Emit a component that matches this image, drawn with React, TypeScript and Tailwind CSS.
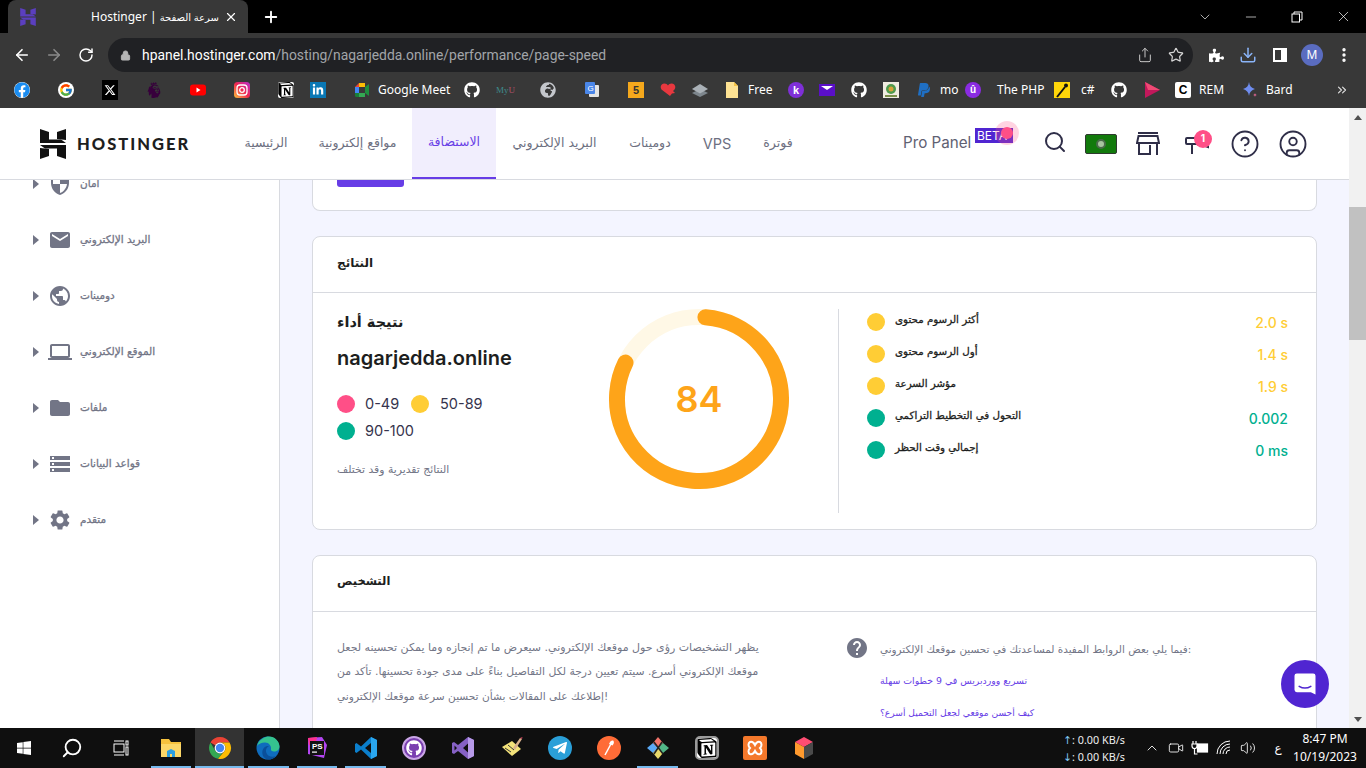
import React from "react";
import { FcGoogle } from "react-icons/fc";
import { FaFacebook, FaGithub, FaLinkedinIn, FaTelegramPlane, FaWindows, FaPaypal, FaPuzzlePiece, FaGlobeAfrica } from "react-icons/fa";
import { FaXTwitter } from "react-icons/fa6";
import { SiNotion, SiPremierleague } from "react-icons/si";
import { MdSecurity, MdEmail, MdPublic, MdLaptop, MdFolder, MdStorage, MdSettings, MdHelp } from "react-icons/md";
import { ArrowLeft, ArrowRight, RotateCw, Lock, Share, Star, Download, X, Plus, ChevronDown, ChevronUp, Minus, Search, HelpCircle, CircleUser, MoreVertical, ChevronsRight, Volume2, Video } from "lucide-react";

const ar = "font-['DejaVu_Sans',sans-serif]";
const faux = "[-webkit-text-stroke:0.3px_currentColor]";

function HLogo({ className, fill }: { className: string; fill: string }) {
  return (
    <svg viewBox="0 0 26 30" className={className} fill={fill}>
      <polygon points="0,0 9,3 9,10.5 21,10.5 26,14 0,14" />
      <polygon points="17,3 26,0 26,11 17,10" />
      <polygon points="26,30 17,27 17,19.5 5,19.5 0,16 26,16" />
      <polygon points="9,27 0,30 0,19 9,20" />
    </svg>
  );
}

function Chrome({ s }: { s: string }) {
  return (
    <svg viewBox="0 0 24 24" className={s}>
      <path fill="#ea4335" d="M12 1a11 11 0 0 1 9.53 5.5H12a5.5 5.5 0 0 0-4.76 2.75L2.47 6.5A11 11 0 0 1 12 1z" />
      <path fill="#34a853" d="M2.47 6.5l4.77 8.25A5.5 5.5 0 0 0 14.75 16.76L10 22.8A11 11 0 0 1 2.47 6.5z" />
      <path fill="#fbbc04" d="M21.53 6.5H12a5.5 5.5 0 0 1 4.76 8.25L10 22.8A11 11 0 0 0 21.53 6.5z" />
      <circle cx="12" cy="12" r="5.4" fill="#fff" />
      <circle cx="12" cy="12" r="4.2" fill="#4285f4" />
    </svg>
  );
}

function Edge({ s }: { s: string }) {
  return (
    <svg viewBox="0 0 24 24" className={s}>
      <circle cx="12" cy="12" r="11.5" fill="#0f6cbd" />
      <path fill="#35c28f" d="M1 10C3 3 9 .5 13 .5c6 0 10.5 5 10.5 10 0 3-2.5 5-5.5 5-2 0-3.5-1-3-2.5C15.500 10 13 6.500 9 6.500 5.500 6.500 2.500 8 1 10z" />
      <path fill="#0a4f9a" d="M13 23.500C8 23.500 5.500 19 6.500 14.500 7.500 10.500 11 9.500 13 10c-3 1.500-4 5-2 8 1.500 2.500 5 3.500 9 2-2 2-4.500 3.500-7 3.500z" />
    </svg>
  );
}

type BM = { w: string; icon: React.ReactNode; label?: string; gap?: string };

const Ico = "w-4 h-4";
const bookmarks: BM[] = [
  { w: "w-[44px]", icon: <FaFacebook className={`${Ico} text-[#1a8cf0] bg-white rounded-full`} /> },
  { w: "w-[44px]", icon: <span className="w-4 h-4 rounded-full bg-white flex items-center justify-center"><FcGoogle className="w-[14px] h-[14px]" /></span> },
  { w: "w-[44px]", icon: <span className="w-4 h-5 bg-black flex items-center justify-center"><FaXTwitter className="w-3 h-3 text-white" /></span> },
  { w: "w-[44px]", icon: <SiPremierleague className={`${Ico} text-[#37003c]`} /> },
  { w: "w-[44px]", icon: (
    <svg viewBox="0 0 16 16" className={Ico}><rect y="2.500" width="16" height="11" rx="3" fill="#f00" /><path d="M6.500 5.500v5l4-2.500z" fill="#fff" /></svg>) },
  { w: "w-[44px]", icon: (
    <svg viewBox="0 0 16 16" className={Ico}>
      <defs><linearGradient id="ig" x1="0" y1="1" x2="1" y2="0"><stop offset="0" stopColor="#fdc43a" /><stop offset="0.5" stopColor="#f0264f" /><stop offset="1" stopColor="#b62fd0" /></linearGradient></defs>
      <rect width="16" height="16" rx="3.500" fill="url(#ig)" />
      <rect x="3" y="3" width="10" height="10" rx="3" fill="none" stroke="#fff" strokeWidth="1.300" />
      <circle cx="8" cy="8" r="2.300" fill="none" stroke="#fff" strokeWidth="1.300" />
    </svg>) },
  { w: "w-[32px]", icon: <span className="w-4 h-4 bg-white rounded-[2px] flex items-center justify-center"><SiNotion className="w-4 h-4 text-black" /></span> },
  { w: "w-[44px]", icon: <span className="w-4 h-4 bg-[#0a78b5] flex items-center justify-center"><FaLinkedinIn className="w-3 h-3 text-white" /></span> },
  { w: "w-[110px]", label: "Google Meet", icon: (
    <svg viewBox="0 0 16 16" className={Ico}>
      <path fill="#ea4335" d="M1 5l4-4v4z" /><path fill="#4285f4" d="M1 5h4v6H1z" /><path fill="#fbbc04" d="M5 1h6v4H5z" />
      <path fill="#1e8e3e" d="M11 5v6l4 3V2z" /><path fill="#34a853" d="M5 11h6v4H5z" /><path fill="#188038" d="M1 11h4v4H2.500A1.500 1.500 0 0 1 1 13.500z" />
    </svg>) },
  { w: "w-[32px]", icon: <FaGithub className={`${Ico} text-white`} /> },
  { w: "w-[44px]", icon: <span className="text-[9px] leading-none text-[#3f8a8c] w-4 whitespace-nowrap font-['Liberation_Serif',serif]">My<span className="text-[#b0506a]">U</span></span> },
  { w: "w-[44px]", icon: <FaGlobeAfrica className={`${Ico} text-[#c4c7cc]`} /> },
  { w: "w-[44px]", icon: (
    <svg viewBox="0 0 16 16" className={Ico}>
      <rect x="5" y="3" width="10" height="12" rx="1" fill="#e3e3e3" /><rect x="1" y="0" width="10" height="12" rx="1" fill="#4a86e8" />
      <text x="3.500" y="9" fontSize="8" fill="#fff" fontFamily="Liberation Sans">G</text>
    </svg>) },
  { w: "w-[32px]", icon: <span className="w-4 h-4 bg-[#f5a81c] text-[#333] text-[11px] font-bold flex items-center justify-center leading-none font-['Liberation_Sans',sans-serif]">5</span> },
  { w: "w-[32px]", icon: (
    <svg viewBox="0 0 16 16" className={Ico}><path fill="#e8383f" d="M10 14L1.500 7.500C-.500 4.500 1.500 1.500 4.500 1.500 6 1.500 7.300 2.300 8 3.500 8.700 2.300 10 1.500 11.500 1.500 14.500 1.500 16.500 4.500 14.500 7.500L13 9l2 2-3 .5z" /></svg>) },
  { w: "w-[32px]", icon: (
    <svg viewBox="0 0 16 16" className={Ico}><path fill="#7d868d" d="M8 7l8 4-8 4-8-4z" /><path fill="#aab1b7" d="M8 2l8 5-8 4.500L0 7z" /></svg>) },
  { w: "w-[64px]", label: "Free", icon: (
    <svg viewBox="0 0 16 16" className={Ico}><path fill="#fde293" d="M2 0h8l4 4v12H2z" /><path fill="#f6c344" d="M10 0l4 4h-4z" /></svg>) },
  { w: "w-[31px]", icon: <span className="w-4 h-4 rounded-full bg-[#7f2fd8] text-white text-[11px] font-bold flex items-center justify-center leading-none font-['Liberation_Sans',sans-serif]">k</span> },
  { w: "w-[32px]", icon: (
    <svg viewBox="0 0 16 16" className={Ico}><rect y="2" width="16" height="12" fill="#5a0fc8" /><path fill="#fff" d="M2 4h12L8 8z" /></svg>) },
  { w: "w-[32px]", icon: <FaGithub className={`${Ico} text-white`} /> },
  { w: "w-[33px]", icon: (
    <svg viewBox="0 0 16 16" className={Ico}><rect width="16" height="16" fill="#f0ece0" /><circle cx="8" cy="7" r="5" fill="#4f9a4b" /><circle cx="8" cy="7" r="2.500" fill="#d9a23a" /><rect x="2" y="13" width="12" height="2" fill="#7a8f4a" /></svg>) },
  { w: "w-[49px]", label: "mo", icon: <FaPaypal className={`${Ico} text-[#1f6fc4]`} /> },
  { w: "w-[89px]", label: "The PHP", gap: "ml-4", icon: <span className="w-4 h-4 rounded-full bg-[#8a2be2] text-white text-[10px] font-bold flex items-center justify-center leading-none font-['Liberation_Sans',sans-serif]">û</span> },
  { w: "w-[57px]", label: "c#", gap: "ml-[11px]", icon: (
    <svg viewBox="0 0 16 16" className={Ico}><rect width="16" height="16" fill="#ffd60a" /><path d="M3 15L11 5" stroke="#111" strokeWidth="2" /><circle cx="12" cy="3.500" r="2" fill="#111" /></svg>) },
  { w: "w-[33px]", icon: <FaGithub className={`${Ico} text-white`} /> },
  { w: "w-[31px]", icon: (
    <svg viewBox="0 0 16 16" className={Ico}><path fill="#c2185b" d="M1 0l15 8-15 8z" /><path fill="#ef4a74" d="M1 0l15 8H4z" /></svg>) },
  { w: "w-[67px]", label: "REM", icon: <span className="w-4 h-4 rounded-[2px] bg-white text-black text-[12px] font-bold flex items-center justify-center leading-none font-['Liberation_Sans',sans-serif]">C</span> },
  { w: "w-[78px]", label: "Bard", icon: (
    <svg viewBox="0 0 16 16" className={Ico}><path fill="#6f8df0" d="M7 0c.5 4 2.500 6 6 7-3.500 1-5.500 3-6 7-.5-4-2.500-6-6-7 3.500-1 5.500-3 6-7z" /><path fill="#d9658f" d="M13 11c.2 1.200.8 1.800 2 2-1.200.2-1.800.8-2 2-.2-1.200-.8-1.800-2-2 1.200-.2 1.800-.8 2-2z" /></svg>) },
];

const navItems = [
  { t: "الرئيسية", w: "w-[74px]" },
  { t: "مواقع إلكترونية", w: "w-[109px]" },
  { t: "الاستضافة", w: "w-[84px]", active: true },
  { t: "البريد الإلكتروني", w: "w-[117px]" },
  { t: "دومينات", w: "w-[74px]" },
  { t: "VPS", w: "w-[60px]", latin: true },
  { t: "فوترة", w: "w-[62px]" },
];

const sideItems = [
  { t: "أمان", I: MdSecurity },
  { t: "البريد الإلكتروني", I: MdEmail },
  { t: "دومينات", I: MdPublic },
  { t: "الموقع الإلكتروني", I: MdLaptop },
  { t: "ملفات", I: MdFolder },
  { t: "قواعد البيانات", I: MdStorage },
  { t: "متقدم", I: MdSettings },
];

const metrics = [
  { t: "أكثر الرسوم محتوى", v: "2.0 s", dot: "bg-[#ffcd35]", c: "text-[#ffcd35]" },
  { t: "أول الرسوم محتوى", v: "1.4 s", dot: "bg-[#ffcd35]", c: "text-[#ffcd35]" },
  { t: "مؤشر السرعة", v: "1.9 s", dot: "bg-[#ffcd35]", c: "text-[#ffcd35]" },
  { t: "التحول في التخطيط التراكمي", v: "0.002", dot: "bg-[#00b090]", c: "text-[#00b090]" },
  { t: "إجمالي وقت الحظر", v: "0 ms", dot: "bg-[#00b090]", c: "text-[#00b090]" },
];

type TB = { icon: React.ReactNode; line?: boolean; active?: boolean };
const tS = "w-6 h-6";
const taskItems: TB[] = [
  { line: true, icon: (
    <svg viewBox="0 0 24 24" className={tS}><path fill="#f6c23e" d="M2 3h8l2 3h10v15H2z" /><rect x="2" y="8" width="20" height="13" fill="#fcd768" /><path fill="#2d9fe0" d="M8 21v-6l4-2 4 2v6h-3v-3h-2v3z" /></svg>) },
  { line: true, active: true, icon: <Chrome s={tS} /> },
  { line: true, icon: <Edge s={tS} /> },
  { line: true, icon: (
    <svg viewBox="0 0 24 24" className={tS}><path fill="#b345f1" d="M3 2l14-1 5 8-3 13-8-2-8-2z" /><path fill="#ff318c" d="M3 2l9-1-2 9-6-1z" /><rect x="5" y="5" width="14" height="14" fill="#111" /><text x="7" y="13" fontSize="8" fontWeight="700" fill="#fff" fontFamily="Liberation Sans">PS</text><rect x="7" y="15.500" width="5" height="1.200" fill="#fff" /></svg>) },
  { line: true, icon: (
    <svg viewBox="0 0 24 24" className={tS}><path fill="#0b7fcc" d="M17 1l6 3v16l-6 3-10-9.500L2.500 17 1 16V8l1.500-1L7 10.500z" /><path fill="#2aa6ee" d="M17 1l6 3v16l-6 3z" /><path fill="#0f0f0f" d="M17 7l-6 5 6 5z" /></svg>) },
  { icon: (
    <span className="w-6 h-6 rounded-full bg-[#7a3fb0] border-2 border-[#caa6e6] flex items-center justify-center"><FaGithub className="w-4 h-4 text-white" /></span>) },
  { icon: (
    <svg viewBox="0 0 24 24" className={tS}><path fill="#8661c5" d="M17 1l6 3v16l-6 3-10-8-4 3-2-1V7l2-1 4 3z" /><path fill="#b79ae8" d="M17 1l6 3v16l-6 3z" /><path fill="#0f0f0f" d="M17 7.500l-5 4.500 5 4.500zM3.500 9.500v5L6 12z" /></svg>) },
  { icon: (
    <svg viewBox="0 0 24 24" className={tS}><path fill="#f3e27a" d="M2 11l10-6 9 8-9 7z" /><path d="M5 12l6 4M8 9l6 5" stroke="#333" strokeWidth="1" /><path d="M13 12l7-10 2 1-7 11z" fill="#d9b08c" /><path d="M20 2l2 1 .5-2z" fill="#d0455f" /></svg>) },
  { icon: <span className="w-6 h-6 rounded-full bg-[#2a9fd8] flex items-center justify-center"><FaTelegramPlane className="w-4 h-4 text-white" /></span> },
  { icon: (
    <svg viewBox="0 0 24 24" className={tS}><circle cx="12" cy="12" r="12" fill="#ff6c37" /><path d="M8 19l7-13" stroke="#fff" strokeWidth="1.500" /><path d="M12 8c1-3 3-4 4-3.500s1.500 2.500-.5 5z" fill="#fff" /></svg>) },
  { line: true, icon: (
    <svg viewBox="0 0 24 24" className={tS}><path fill="#5aa9f5" d="M7 7l5 5-5 5-6-5z" /><path fill="#f1736a" d="M12 1l5 6-5 5-5-5z" /><path fill="#e7d96b" d="M12 12l5 5-5 6-5-6z" /><path fill="#52b788" d="M17 7l6 5-6 5-5-5z" /><path d="M8 6l9 12M16 6L8 18" stroke="#222" strokeWidth="1.500" /></svg>) },
  { icon: (
    <span className="w-6 h-6 rounded-[5px] bg-white border-2 border-[#9a9a9a] flex items-center justify-center"><SiNotion className="w-5 h-5 text-black" /></span>) },
  { icon: (
    <svg viewBox="0 0 24 24" className={tS}><rect width="24" height="24" rx="2" fill="#f4782b" /><path d="M7 6c3-1 4 1 5 3 1-2 2-4 5-3 2 1 2 4 0 6 2 2 2 5 0 6-3 1-4-1-5-3-1 2-2 4-5 3-2-1-2-4 0-6-2-2-2-5 0-6z" fill="none" stroke="#fff" strokeWidth="2" /></svg>) },
  { icon: (
    <svg viewBox="0 0 24 24" className={tS}><path fill="#ff4d73" d="M12 1l9 5-9 5-9-5z" /><path fill="#ff9a2e" d="M3 6l9 5v12l-9-5z" /><path fill="#4a4a4a" d="M21 6v12l-9 5V11z" /></svg>) },
];

export default function App() {
  return (
    <div className="w-[1366px] h-[768px] overflow-hidden flex flex-col bg-white font-['Inter','DejaVu_Sans',sans-serif]">
      {/* Tab strip */}
      <div className="h-[33px] bg-black flex items-stretch shrink-0 text-white">
        <div className="ml-2 w-[240px] bg-[#383838] rounded-t-lg flex items-center pl-3 pr-2 font-['Noto_Sans','DejaVu_Sans',sans-serif]">
          <HLogo className="w-4 h-[18px]" fill="#5b3fbf" />
          <span className="ml-[55px] w-[128px] text-[12px] whitespace-nowrap">Hostinger | <span className="text-[10px]">سرعة الصفحة</span></span>
          <X className="ml-[5px] w-[14px] h-[14px]" strokeWidth={2} />
        </div>
        <div className="ml-[14px] flex items-center"><Plus className="w-[18px] h-[18px]" strokeWidth={2.5} /></div>
        <div className="ml-auto flex items-center">
          <span className="w-[46px] flex justify-center"><ChevronDown className="w-4 h-4" strokeWidth={1} /></span>
          <span className="w-[46px] flex justify-center"><Minus className="w-4 h-4" strokeWidth={1} /></span>
          <span className="w-[46px] flex justify-center">
            <svg viewBox="0 0 12 12" className="w-3 h-3" fill="none" stroke="#fff"><rect x="1" y="3" width="7.500" height="8" /><path d="M3 3V1h8v8H8.500" /></svg>
          </span>
          <span className="w-[46px] flex justify-center"><X className="w-[17px] h-[17px]" strokeWidth={1} /></span>
        </div>
      </div>
      {/* Toolbar */}
      <div className="h-[39px] pt-[5px] bg-[#383838] flex items-center shrink-0 text-white">
        <span className="w-[44px] flex justify-center"><ArrowLeft className="w-[18px] h-[18px]" strokeWidth={2.2} /></span>
        <span className="w-[20px] flex justify-center"><ArrowRight className="w-[18px] h-[18px] text-[#8a8a8a]" strokeWidth={2.2} /></span>
        <span className="w-[44px] flex justify-center"><RotateCw className="w-4 h-4" strokeWidth={2.2} /></span>
        <div className="w-[1085px] h-[34px] rounded-full bg-[#202124] flex items-center pl-[12px] pr-[9px]">
          <Lock className="w-[11px] h-[11px] text-[#b5b5b5] fill-[#b5b5b5]" />
          <span className="ml-[11px] text-[13.900px] whitespace-nowrap font-['Roboto',sans-serif] text-[#a2a5a9]"><span className="text-white">hpanel.hostinger.com</span>/hosting/nagarjedda.online/performance/page-speed</span>
          <Share className="ml-auto w-4 h-4 text-[#c8c8c8]" strokeWidth={1.500} />
          <Star className="ml-[15px] w-4 h-4 text-[#d5d5d5]" strokeWidth={1.800} />
        </div>
        <span className="ml-[7px] w-[32px] flex justify-center"><FaPuzzlePiece className="w-[15px] h-[15px] text-white" /></span>
        <span className="w-[32px] flex justify-center"><Download className="w-[18px] h-[18px] text-[#8ab4f8]" strokeWidth={2} /></span>
        <span className="w-[32px] flex justify-center">
          <span className="w-[14px] h-[14px] border-2 border-white bg-white flex"><span className="w-[6px] h-full bg-[#383838]" /></span>
        </span>
        <span className="w-[32px] flex justify-center"><span className="w-[22px] h-[22px] rounded-full bg-[#5a6cc0] text-[12px] text-white flex items-center justify-center font-['Noto_Sans',sans-serif]">M</span></span>
        <span className="w-[32px] flex justify-center"><MoreVertical className="w-[18px] h-[18px]" strokeWidth={2.5} /></span>
      </div>
      {/* Bookmarks */}
      <div className="h-[36px] bg-[#383838] flex items-center shrink-0 pl-[14px] text-white text-[12px] font-['Noto_Sans',sans-serif]">
        {bookmarks.map((b, i) => (
          <div key={i} className={`${b.w} shrink-0 flex items-center`}>
            {b.icon}
            {b.label && <span className={`${b.gap ?? "ml-2"} whitespace-nowrap`}>{b.label}</span>}
          </div>
        ))}
        <ChevronsRight className="ml-[15px] w-[14px] h-[14px] text-[#ddd]" strokeWidth={2} />
      </div>

      {/* Page */}
      <div className="flex-1 min-h-0 flex">
        <div className="flex-1 min-w-0 flex flex-col">
          {/* Header */}
          <header className="h-[72px] shrink-0 bg-white border-b border-[#d8dae0] flex items-stretch relative z-10">
            <div className="w-[229px] pl-10 flex items-center gap-[11px]">
              <HLogo className="w-[26px] h-[30px]" fill="#111" />
              <span className="mt-[2px] text-[16.500px] font-black tracking-[2px] text-[#1d1e20] font-['Lato',sans-serif] whitespace-nowrap">HOSTINGER</span>
            </div>
            <nav className="flex items-stretch text-[12.500px] text-[#6d7081]">
              {navItems.map((n) => (
                <div key={n.t} className={`${n.w} flex items-center justify-center ${n.latin ? "text-[14.500px]" : ar} ${n.active ? "bg-[#f1eefd] text-[#673de6] border-b-2 border-[#673de6]" : ""}`}>
                  <span className="whitespace-nowrap">{n.t}</span>
                </div>
              ))}
            </nav>
            <div className="ml-auto flex items-center pr-8 text-[#2f2e48]">
              <div className="w-[128px] relative text-[15.200px] text-[#5f6172] whitespace-nowrap">
                Pro Panel
                <span className="absolute left-[72px] -top-[4px] h-[15px] w-[38px] bg-[#5025d1] text-white text-[12px] leading-[15px] pl-[2px] overflow-hidden">BETA</span>
                <span className="absolute left-[92px] -top-[11px] w-6 h-6 rounded-full bg-[#ff4f87]/25" />
                <span className="absolute left-[98px] -top-[5px] w-3 h-3 rounded-full bg-[#ff4f87]" />
              </div>
              <span className="w-[48px] -mt-[4px] flex justify-center"><Search className="w-[24px] h-[24px]" strokeWidth={2} /></span>
              <span className="w-[44px] flex justify-center">
                <span className="w-[32px] h-5 bg-[#127a0c] border border-[#2f3a2f] rounded-[2px] flex items-center justify-center">
                  <span className="w-[10px] h-[10px] rounded-full bg-[#a8c4a0] border-2 border-[#4a6a4a]" />
                </span>
              </span>
              <span className="w-[50px] flex justify-center">
                <svg viewBox="0 0 24 24" className="w-6 h-6" fill="none" stroke="currentColor" strokeWidth="2"><path d="M2 1h20M2.500 4h19L23 11H1zM3 11v12M21 11v12M3 22h11v-9" /></svg>
              </span>
              <span className="w-[48px] flex justify-center relative">
                <svg viewBox="0 0 26 24" className="w-[26px] h-6" fill="none" stroke="currentColor" strokeWidth="2"><path d="M3 6h13l8-3v12l-8-3H3a1 1 0 0 1-1-1V7a1 1 0 0 1 1-1zM8 12v10" /></svg>
                <span className="absolute left-[21px] -top-[2px] w-[18px] h-[18px] rounded-full bg-[#ff4f87] text-white text-[10px] font-bold flex items-center justify-center">1</span>
              </span>
              <span className="w-[48px] flex justify-center"><HelpCircle className="w-[30px] h-[30px]" strokeWidth={1.500} /></span>
              <span className="w-[48px] flex justify-center"><CircleUser className="w-[30px] h-[30px]" strokeWidth={1.500} /></span>
            </div>
          </header>
          {/* Body */}
          <div className="flex-1 min-h-0 flex overflow-hidden">
            {/* Sidebar */}
            <aside className="w-[280px] shrink-0 bg-white border-r border-[#d8dae0] overflow-hidden">
              <div className="-mt-[24px]">
                {sideItems.map(({ t, I }) => (
                  <div key={t} className="h-[56px] flex items-center pl-[33px] text-[#727586]">
                    <span className="w-0 h-0 border-y-[5px] border-y-transparent border-l-[6px] border-l-[#727586]" />
                    <I className="ml-[9px] w-6 h-6" />
                    <span className={`ml-2 text-[10.500px] whitespace-nowrap ${faux} ${ar}`}>{t}</span>
                  </div>
                ))}
              </div>
            </aside>
            {/* Main */}
            <main className="flex-1 min-w-0 bg-[#f4f5ff] px-8 overflow-hidden">
              {/* Card 1 */}
              <div className="h-[31px] bg-white border border-t-0 border-[#d8dae0] rounded-b-lg pl-6">
                <div className="w-[67px] h-[7px] bg-[#673de6] rounded-b-[3px]" />
              </div>
              {/* Card 2 */}
              <section className="mt-[25px] h-[294px] bg-white border border-[#d8dae0] rounded-lg flex flex-col">
                <div className={`h-[56px] pb-1 shrink-0 border-b border-[#d8dae0] px-6 flex items-center text-[12px] font-bold text-[#1d1e20] ${ar}`}>النتائج</div>
                <div className="flex px-6 pt-4">
                  <div className="w-[272px] shrink-0">
                    <div className={`h-[28px] flex items-center text-[14.500px] font-bold text-[#1d1e20] ${ar}`}>نتيجة أداء</div>
                    <div className="mt-[7px] h-[28px] flex items-center text-[20px] font-semibold text-[#1d1e20]">nagarjedda.online</div>
                    <div className="mt-[23px] h-[18px] flex items-center text-[14.500px] text-[#36344d]">
                      <span className="w-[18px] h-[18px] rounded-full bg-[#ff4f87]" />
                      <span className="ml-[10px] w-[46px]">0-49</span>
                      <span className="w-[18px] h-[18px] rounded-full bg-[#ffcd35]" />
                      <span className="ml-[11px]">50-89</span>
                    </div>
                    <div className="mt-[9px] h-[18px] flex items-center text-[14.500px] text-[#36344d]">
                      <span className="w-[18px] h-[18px] rounded-full bg-[#00b090]" />
                      <span className="ml-[10px]">90-100</span>
                    </div>
                    <div className={`mt-[22px] h-4 flex items-center text-[10.800px] text-[#727586] ${ar}`}>النتائج تقديرية وقد تختلف</div>
                  </div>
                  <div className="w-[180px] h-[180px] shrink-0 relative">
                    <svg viewBox="0 0 180 180" className="w-[180px] h-[180px]">
                      <circle cx="90" cy="90" r="82" fill="none" stroke="#fff8e6" strokeWidth="16" />
                      <circle cx="90" cy="90" r="82" fill="none" stroke="#fea419" strokeWidth="16" strokeLinecap="round" strokeDasharray="417 515.200" transform="rotate(-85.500 90 90)" />
                    </svg>
                    <span className="absolute inset-0 flex items-center justify-center text-[36px] font-semibold text-[#fea419]">84</span>
                  </div>
                  <div className="ml-[49px] h-[204px] flex-1 border-l border-[#d8dae0] pl-[28px] pr-[4px] pt-1 flex flex-col gap-[14px]">
                    {metrics.map((m) => (
                      <div key={m.t} className="h-[18px] flex items-center">
                        <span className={`w-[18px] h-[18px] rounded-full shrink-0 ${m.dot}`} />
                        <span className={`ml-[10px] -mt-[4px] text-[10.300px] text-[#1d1e20] whitespace-nowrap ${faux} ${ar}`}>{m.t}</span>
                        <span className={`ml-auto text-[14px] font-medium ${m.c}`}>{m.v}</span>
                      </div>
                    ))}
                  </div>
                </div>
              </section>
              {/* Card 3 */}
              <section className="mt-[25px] h-[400px] bg-white border border-[#d8dae0] rounded-t-lg">
                <div className={`h-[56px] pb-1 border-b border-[#d8dae0] px-6 flex items-center text-[11.500px] font-bold text-[#1d1e20] ${ar}`}>التشخيص</div>
                <div className="flex pl-6 pt-[24px]">
                  <div className={`w-[508px] shrink-0 leading-[24px] text-[#727586] ${ar}`}>
                    <div className="text-[11px] whitespace-nowrap">يظهر التشخيصات رؤى حول موقعك الإلكتروني. سيعرض ما تم إنجازه وما يمكن تحسينه لجعل</div>
                    <div className="text-[10.800px] whitespace-nowrap">موقعك الإلكتروني أسرع. سيتم تعيين درجة لكل التفاصيل بناءً على مدى جودة تحسينها. تأكد من</div>
                    <div className="text-[10.600px] whitespace-nowrap">إطلاعك على المقالات بشأن تحسين سرعة موقعك الإلكتروني!</div>
                  </div>
                  <div className="flex items-start">
                    <MdHelp className="w-6 h-6 text-[#727586]" />
                    <div className={`ml-[11px] ${ar}`}>
                      <div className="mt-[1px] text-[10.400px] h-[24px] leading-[24px] text-[#727586] whitespace-nowrap">فيما يلي بعض الروابط المفيدة لمساعدتك في تحسين موقعك الإلكتروني:</div>
                      <div className="mt-[8px] text-[9.400px] h-[24px] leading-[24px] text-[#673de6] whitespace-nowrap">تسريع ووردبريس في 9 خطوات سهلة</div>
                      <div className="mt-[8px] text-[9.100px] h-[24px] leading-[24px] text-[#673de6] whitespace-nowrap">كيف أحسن موقعي لجعل التحميل أسرع؟</div>
                    </div>
                  </div>
                </div>
              </section>
            </main>
          </div>
        </div>
        {/* Scrollbar */}
        <div className="w-[17px] shrink-0 bg-[#f1f1f1] flex flex-col items-center relative">
          <span className="mt-[7px] w-0 h-0 border-x-[4px] border-x-transparent border-b-[5px] border-b-[#505050]" />
          <span className="mt-[87px] w-[17px] h-[133px] bg-[#c1c1c1]" />
          <span className="mt-auto mb-[6px] w-0 h-0 border-x-[4px] border-x-transparent border-t-[5px] border-t-[#505050]" />
          {/* Chat bubble */}
          <button className="absolute -left-[68px] bottom-[20px] w-12 h-12 rounded-full bg-[#5025d1] flex items-center justify-center">
            <svg viewBox="0 0 24 24" className="w-7 h-7" fill="#fff"><path d="M5 3h14a2 2 0 0 1 2 2v16l-4-2H5a2 2 0 0 1-2-2V5a2 2 0 0 1 2-2z" /><path d="M7 14c3 1.800 7 1.800 10 0" fill="none" stroke="#5025d1" strokeWidth="1.300" strokeLinecap="round" /></svg>
          </button>
        </div>
      </div>

      {/* Taskbar */}
      <div className="h-[40px] shrink-0 bg-[#0f0f0f] flex items-stretch text-white font-['Noto_Sans','DejaVu_Sans',sans-serif]">
        <span className="w-[48px] flex items-center justify-center"><FaWindows className="w-4 h-4" /></span>
        <span className="w-[48px] flex items-center justify-center"><Search className="w-[22px] h-[22px] -scale-x-100" strokeWidth={2} /></span>
        <span className="w-[50.600px] flex items-center justify-center">
          <svg viewBox="0 0 16 16" className="w-4 h-4" fill="none" stroke="#fff"><path d="M1 1h10M1 15h10" /><rect x="1" y="4" width="10" height="8" /><rect x="13" y="1" width="2" height="4" /><rect x="13" y="7" width="2" height="8" /></svg>
        </span>
        {taskItems.map((t, i) => (
          <div key={i} className={`w-[48.700px] shrink-0 relative flex items-center justify-center ${t.active ? "bg-[#333333]" : ""}`}>
            {t.icon}
            {t.line && <span className={`absolute bottom-0 h-[2px] bg-[#76b9ed] ${t.active ? "left-0 right-0" : "left-1 right-1"}`} />}
          </div>
        ))}
        <div className="ml-auto flex items-center">
          <div className="w-[60px] text-[10.800px] leading-[17px] whitespace-nowrap text-[#eee]">
            <div><span className="text-[#7fc4ef]">↑</span>: 0.00 KB/s</div>
            <div><span className="text-[#7fc4ef]">↓</span>: 0.00 KB/s</div>
          </div>
          <span className="ml-[19px] w-[20px] flex justify-center"><ChevronUp className="w-4 h-4" strokeWidth={1.300} /></span>
          <span className="ml-[2px] w-[24px] flex justify-center"><Video className="w-4 h-4" strokeWidth={1.300} /></span>
          <span className="w-[24px] flex justify-center">
            <svg viewBox="0 0 18 16" className="w-[18px] h-4" fill="none" stroke="#fff" strokeWidth="1.200"><path d="M2 1v3M5 1v3M1 4h5v2a2.500 2.500 0 0 1-5 0zM3.500 9v5h3" /><rect x="6.500" y="4" width="10" height="8" fill="#fff" /></svg>
          </span>
          <span className="w-[24px] flex justify-center">
            <svg viewBox="0 0 16 16" className="w-4 h-4" fill="none" stroke="#fff" strokeWidth="1"><path d="M1 14a13 13 0 0 1 13-13M4 14a10 10 0 0 1 10-10M7 14a7 7 0 0 1 7-7M10 14a4 4 0 0 1 4-4" /></svg>
          </span>
          <span className="w-[24px] flex justify-center"><Volume2 className="w-4 h-4" strokeWidth={1.300} /></span>
          <span className={`ml-[8px] w-[20px] text-center text-[12px] ${ar}`}>ع</span>
          <div className="ml-[1px] w-[72px] text-center text-[12px] leading-[18px]">
            <div>8:47 PM</div>
            <div>10/19/2023</div>
          </div>
          <span className="w-[5px]" />
        </div>
      </div>
    </div>
  );
}
